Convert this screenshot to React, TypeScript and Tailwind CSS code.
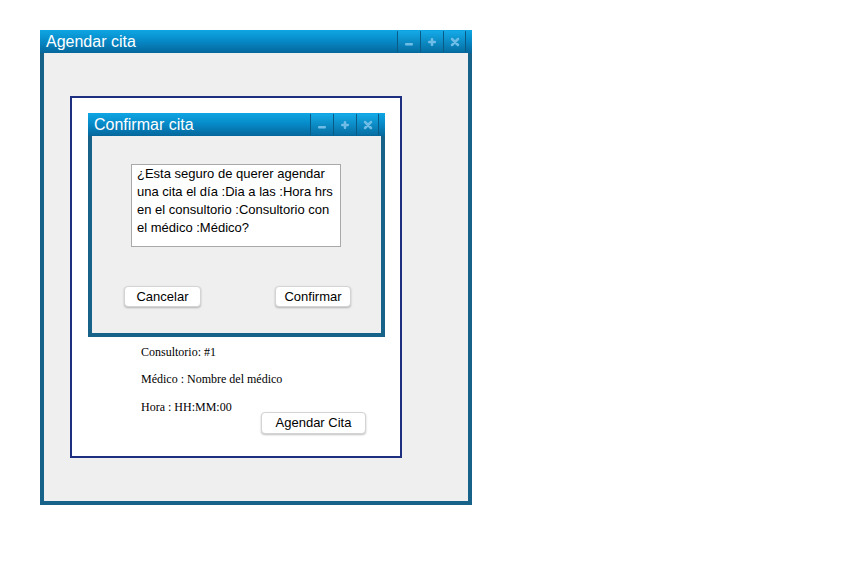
import React from 'react'

function TitleButtons() {
  const btn = 'flex h-[21px] w-[23px] items-center justify-center bg-gradient-to-b from-[#14aae8] to-[#066fa4] border-l border-[#0a5a86]'
  return (
    <div className="flex h-full items-start pt-[1px]">
      <div className={btn}>
        <svg width="10" height="10" viewBox="0 0 10 10">
          <rect x="1" y="6" width="8" height="2.5" rx="1" fill="#6fbde6" />
        </svg>
      </div>
      <div className={btn}>
        <svg width="10" height="10" viewBox="0 0 10 10">
          <rect x="3.75" y="1" width="2.5" height="8" rx="1" fill="#6fbde6" />
          <rect x="1" y="3.75" width="8" height="2.5" rx="1" fill="#6fbde6" />
        </svg>
      </div>
      <div className={`${btn} border-r`}>
        <svg width="10" height="10" viewBox="0 0 10 10">
          <path d="M2 2 L8 8 M8 2 L2 8" stroke="#6fbde6" strokeWidth="2.5" strokeLinecap="round" />
        </svg>
      </div>
    </div>
  )
}

function Window({
  title,
  className,
  children,
}: {
  title: string
  className: string
  children: React.ReactNode
}) {
  return (
    <div className={`flex flex-col bg-[#166289] px-[4px] pb-[4px] ${className}`}>
      <div className="-mx-[4px] flex h-[23px] items-center justify-between bg-gradient-to-b from-[#0fa6e4] via-[#0788c6] to-[#05679b] pl-[6px] pr-[6px]">
        <span className="text-[16px] leading-none text-white">{title}</span>
        <TitleButtons />
      </div>
      <div className="flex-1 bg-[#efefef]">{children}</div>
    </div>
  )
}

function Button({ label, className }: { label: string; className: string }) {
  return (
    <button
      className={`flex h-[21px] items-center justify-center rounded-[4px] border border-[#d4d4d4] bg-white text-[13px] text-black shadow-[0_1px_2px_rgba(0,0,0,0.25)] ${className}`}
    >
      {label}
    </button>
  )
}

export default function App() {
  return (
    <div className="h-[568px] w-[868px] bg-white pl-[40px] pt-[30px] font-['Liberation_Sans',Arial,sans-serif]">
      <Window title="Agendar cita" className="h-[475px] w-[432px]">
        <div className="pl-[26px] pt-[43px]">
          <div className="h-[362px] w-[332px] border-2 border-[#1f2f80] bg-white pl-[16px] pt-[15px]">
            <Window title="Confirmar cita" className="h-[224px] w-[297px]">
              <div className="flex flex-col pt-[28px]">
                <div className="ml-[39px] h-[83px] w-[210px] border border-[#a9a9a9] bg-white px-[5px] text-[13px] leading-[18px] text-black">
                  ¿Esta seguro de querer agendar una cita el día :Dia a las :Hora hrs en el consultorio :Consultorio con el médico :Médico?
                </div>
                <div className="mt-[39px] flex">
                  <Button label="Cancelar" className="ml-[32px] w-[77px]" />
                  <Button label="Confirmar" className="ml-[74px] w-[76px]" />
                </div>
              </div>
            </Window>
            <div className="flex flex-col pl-[53px] pt-[8px] font-['Liberation_Serif','Times_New_Roman',serif] text-[12px] leading-[14px] text-black">
              <p>Consultorio: #1</p>
              <p className="mt-[13px]">Médico : Nombre del médico</p>
              <p className="mt-[14px]">Hora : HH:MM:00</p>
              <Button label="Agendar Cita" className="-mt-[2px] ml-[120px] w-[105px] h-[22px] font-['Liberation_Sans',Arial,sans-serif]" />
            </div>
          </div>
        </div>
      </Window>
    </div>
  )
}
